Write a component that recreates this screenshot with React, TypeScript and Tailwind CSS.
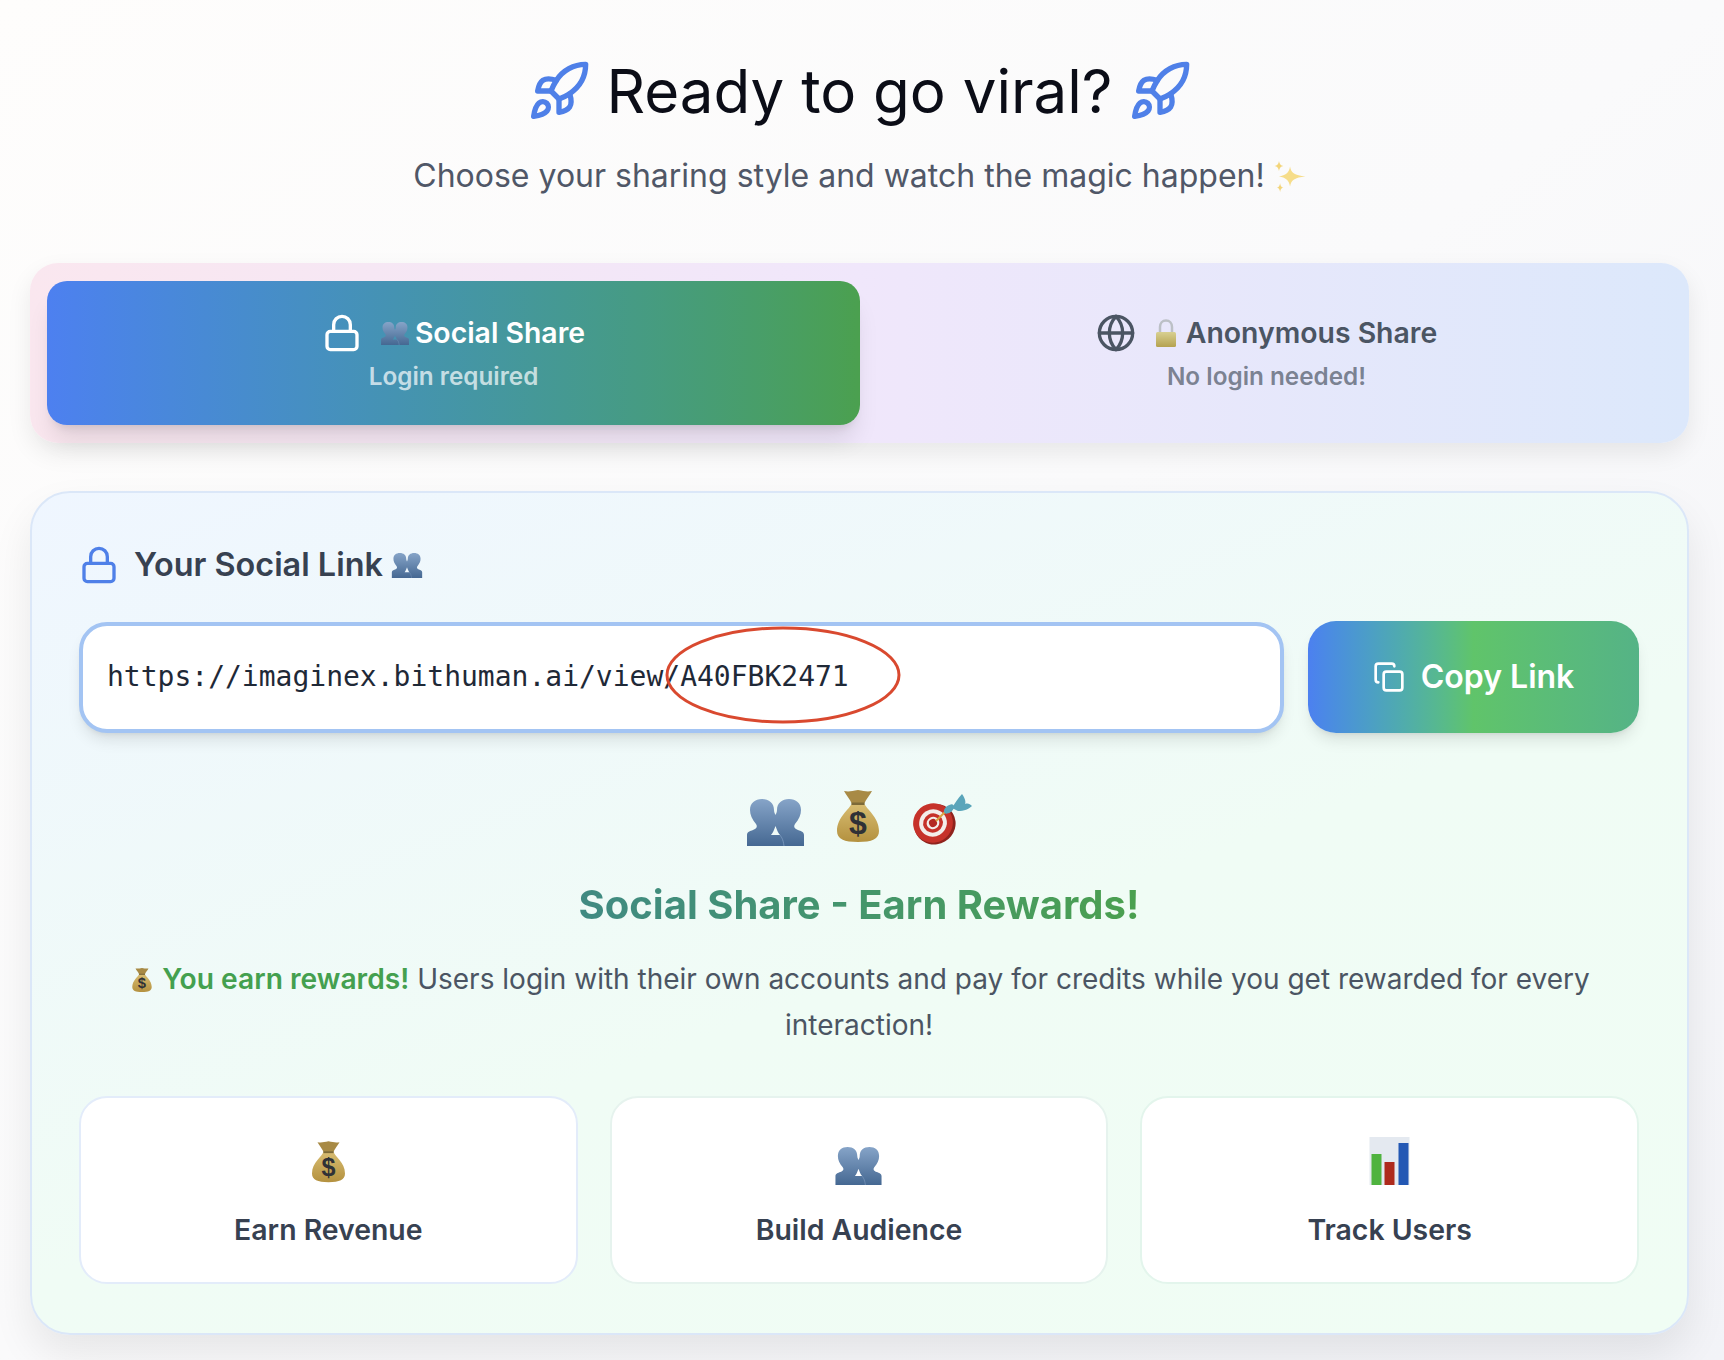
import { Rocket, Lock, Globe, Copy } from "lucide-react"

function Busts({ className }: { className: string }) {
  return (
    <svg viewBox="0 0 57 47" className={className}>
      <defs>
        <linearGradient id="bustFill" x1="0" y1="0" x2="0" y2="1">
          <stop offset="0" stopColor="#86a4c8" />
          <stop offset="1" stopColor="#456892" />
        </linearGradient>
      </defs>
      <path
        fill="url(#bustFill)"
        fillRule="evenodd"
        d="M0 47V36C0 33 3 32 6 31C9 30 11 28 9 25C5 20 3 16 3 11C3 4 8 0 15 0C22 0 27 4 27 11C27 13 28 15 28.500 16C29 15 30 13 30 11C30 4 35 0 42 0C49 0 54 4 54 11C54 16 52 20 48 25C46 28 48 30 51 31C54 32 57 33 57 36V47ZM28.500 27C27 31 26 34 24 36H33C31 34 30 31 28.500 27Z"
      />
      <path fill="none" stroke="#7f9cc0" strokeWidth="0.8" d="M33 36c1 2 3 3 4 11" />
    </svg>
  )
}

function MoneyBag({ className }: { className: string }) {
  return (
    <svg viewBox="0 0 42 54" className={className}>
      <defs>
        <linearGradient id="bagFill" x1="0" y1="0" x2="0" y2="1">
          <stop offset="0" stopColor="#d8bd72" />
          <stop offset="1" stopColor="#b4913f" />
        </linearGradient>
      </defs>
      <path fill="#a88a45" d="M7 3c5 1 8 0 14-1 6 1 9 2 14 1-2 4-6 8-8 13H15C13 11 9 7 7 3z" />
      <path fill="url(#bagFill)" d="M15 15h12c2 6 15 14 15 28 0 8-7 11-21 11S0 51 0 43c0-14 13-22 15-28z" />
      <path fill="#7d6a38" d="M14.500 14.500h13v2.500h-13z" />
      <text x="21" y="46" textAnchor="middle" fontSize="32" fontWeight="700" fill="#2f3136" fontFamily="'Liberation Sans', sans-serif">$</text>
    </svg>
  )
}

function Dart({ className }: { className: string }) {
  return (
    <svg viewBox="0 0 60 52" className={className}>
      <g transform="rotate(-30 21 29)">
        <ellipse cx="22" cy="31" rx="21" ry="20" fill="#8f231d" />
        <ellipse cx="21" cy="29" rx="20" ry="19.500" fill="#c6322a" />
        <ellipse cx="21" cy="29" rx="14" ry="13.500" fill="#f3eeea" />
        <ellipse cx="21" cy="29" rx="10" ry="9.500" fill="#c6322a" />
        <ellipse cx="21" cy="29" rx="6.500" ry="6" fill="#f3eeea" />
        <ellipse cx="21" cy="29" rx="4" ry="4" fill="#b32a23" />
      </g>
      <path stroke="#d9a441" strokeWidth="2" d="M24 27l9-9" />
      <ellipse cx="37" cy="15" rx="6" ry="3.500" transform="rotate(-40 37 15)" fill="#5aa5ba" />
      <path fill="#5aa5ba" d="M40 14C43 9 46 4 50 0C53 4 54 8 53 10C56 9 58 10 60 12C57 15 52 17 46 17Z" />
    </svg>
  )
}

function Padlock({ className }: { className: string }) {
  return (
    <svg viewBox="0 0 24 28" className={className}>
      <defs>
        <linearGradient id="padFill" x1="0" y1="0" x2="0" y2="1">
          <stop offset="0" stopColor="#d8d092" />
          <stop offset="1" stopColor="#b5a24f" />
        </linearGradient>
      </defs>
      <path fill="none" stroke="#bcc0c6" strokeWidth="2.500" d="M6 14V8c0-4 2.500-6.500 6-6.500s6 2.500 6 6.500v6" />
      <rect x="2" y="13" width="20" height="15" rx="1.500" fill="url(#padFill)" />
    </svg>
  )
}

function BarChart({ className }: { className: string }) {
  return (
    <svg viewBox="0 0 40 48" className={className}>
      <rect width="40" height="48" fill="#e4e9f0" />
      <rect x="2" y="17" width="10" height="31" fill="#4fb33f" />
      <rect x="15" y="25" width="10" height="23" fill="#ae2a1c" />
      <rect x="29" y="6" width="10" height="42" fill="#2358b4" />
    </svg>
  )
}

function Sparkles({ className }: { className: string }) {
  return (
    <svg viewBox="0 0 29 28" className={className}>
      <path fill="#f6dd8a" d="M15 5c1 6 4 8 14 9-10 1-13 3-14 9-1-6-4-8-10-9 6-1 9-3 10-9z" />
      <path fill="#f3d57a" d="M5 0c.5 3 1.500 4 4 4.500C6.500 5 5.500 6 5 9 4.500 6 3.500 5 1 4.500 3.500 4 4.500 3 5 0z" />
      <path fill="#f3d57a" d="M6 20c.4 2.500 1 3.500 3 4-2 .5-2.600 1.500-3 4-.4-2.500-1-3.500-3-4 2-.5 2.600-1.500 3-4z" />
    </svg>
  )
}

export default function App() {
  return (
    <div className="h-[1360px] overflow-hidden bg-gradient-to-br from-[#fefdfc] via-[#fafafb] to-[#f2f3f7] pt-[55px] pr-[35px] pl-[30px] font-['Inter',sans-serif]">
      <div className="flex items-center justify-center gap-4">
        <Rocket className="h-[64px] w-[64px] text-[#4f80e8]" strokeWidth={2} />
        <h1 className="text-[60px] leading-[72px] font-normal text-[#0b0d17]">Ready to go viral?</h1>
        <Rocket className="h-[64px] w-[64px] text-[#4f80e8]" strokeWidth={2} />
      </div>
      <p className="mt-[25px] flex items-center justify-center gap-2 text-[32px] leading-[48px] text-[#505767]">
        Choose your sharing style and watch the magic happen!
        <Sparkles className="h-[31px] w-[33px]" />
      </p>

      <div className="mt-[63px] flex h-[180px] rounded-[28px] bg-gradient-to-r from-[#fae7ef] via-[#f0e7fb] to-[#dce8fb] py-[18px] pr-[16px] pl-[17px] shadow-[0_10px_25px_rgba(0,0,0,0.08)]">
        <button className="flex flex-1 flex-col items-center justify-center rounded-[20px] bg-gradient-to-r from-[#4d80f0] to-[#4ba04f] pt-[1px] shadow-xl">
          <span className="flex items-center text-[28.4px] leading-[40px] font-semibold text-white">
            <Lock className="mr-[19px] h-[40px] w-[40px]" strokeWidth={2} />
            <Busts className="mr-[6px] h-[23px] w-[28px]" />
            Social Share
          </span>
          <span className="mt-[5px] text-[24.3px] leading-[36px] font-semibold text-white/70">Login required</span>
        </button>
        <button className="flex flex-1 flex-col items-center justify-center rounded-[20px] pt-[1px]">
          <span className="flex items-center text-[28.4px] leading-[40px] font-semibold text-[#4b5563]">
            <Globe className="mr-[18px] h-[40px] w-[40px]" strokeWidth={2} />
            <Padlock className="mr-[8px] h-[28px] w-[24px]" />
            Anonymous Share
          </span>
          <span className="mt-[5px] text-[24.3px] leading-[36px] font-semibold text-[#4b5563]/70">No login needed!</span>
        </button>
      </div>

      <div className="mt-[48px] h-[844px] rounded-[40px] border-2 border-[#dbe7f8] bg-[linear-gradient(160deg,#eff6ff,#f0fcf5_55%,#f0fdf4)] pt-[52px] pr-[48px] pl-[47px] shadow-[0_20px_40px_rgba(0,0,0,0.08)]">
        <div className="flex items-center text-[32.4px] leading-[40px] font-semibold text-[#374151]">
          <Lock className="mr-[15px] h-[40px] w-[40px] text-[#4f80e8]" strokeWidth={2} />
          Your Social Link
          <Busts className="ml-[8px] h-[25px] w-[32px]" />
        </div>

        <div className="mt-[36px] flex items-center gap-[24px]">
          <div className="relative flex h-[111px] flex-1 items-center rounded-[28px] border-4 border-[#a3c4f3] bg-white pl-[24px] font-['DejaVu_Sans_Mono',monospace] text-[28px] text-[#1f2937] shadow-lg">
            https://imaginex.bithuman.ai/view/A40FBK2471
            <svg viewBox="0 0 236 100" className="absolute top-[-1px] left-[582px] h-[100px] w-[236px]">
              <ellipse cx="118" cy="50" rx="116" ry="47" fill="none" stroke="#d9492f" strokeWidth="3" />
            </svg>
          </div>
          <button className="flex h-[112px] w-[331px] items-center justify-center gap-[16px] rounded-[28px] bg-gradient-to-r from-[#4c80f0] via-[#60c46a] to-[#55b386] text-[32px] font-semibold text-white shadow-lg">
            <Copy className="h-[32px] w-[32px]" strokeWidth={2} />
            Copy Link
          </button>
        </div>

        <div className="mt-[55px] flex h-[58px] items-end justify-center gap-[33px]">
          <Busts className="h-[47px] w-[57px]" />
          <MoneyBag className="mb-[4px] h-[54px] w-[42px]" />
          <Dart className="h-[52px] w-[60px]" />
        </div>

        <h2 className="mt-[29px] text-center text-[40px] leading-[60px] font-bold">
          <span className="bg-gradient-to-r from-[#408a82] to-[#4ba04f] bg-clip-text text-transparent">Social Share - Earn Rewards!</span>
        </h2>

        <p className="mx-auto mt-[21px] max-w-[1480px] text-center text-[28px] leading-[46px] text-[#4b5563]">
          <MoneyBag className="mr-[10px] ml-[4px] inline-block h-[25px] w-[20px] align-[-3px]" />
          <span className="text-[28.2px] font-semibold text-[#44a04f]">You earn rewards!</span> Users login with their own accounts and pay for credits while you get rewarded for every interaction!
        </p>

        <div className="mt-[48px] grid grid-cols-3 gap-[32px]">
          <div className="flex h-[188px] flex-col items-center rounded-[28px] border-2 border-[#e3ecfa] bg-white pt-[41px]">
            <MoneyBag className="h-[44px] w-[33px]" />
            <span className="mt-[27px] text-[28.4px] leading-[40px] font-semibold text-[#374151]">Earn Revenue</span>
          </div>
          <div className="flex h-[188px] flex-col items-center rounded-[28px] border-2 border-[#e6f3ee] bg-white pt-[49px]">
            <Busts className="h-[38px] w-[47px]" />
            <span className="mt-[25px] text-[28.4px] leading-[40px] font-semibold text-[#374151]">Build Audience</span>
          </div>
          <div className="flex h-[188px] flex-col items-center rounded-[28px] border-2 border-[#e3f5ec] bg-white pt-[39px]">
            <BarChart className="h-[48px] w-[41px]" />
            <span className="mt-[25px] text-[28.4px] leading-[40px] font-semibold text-[#374151]">Track Users</span>
          </div>
        </div>
      </div>
    </div>
  )
}
